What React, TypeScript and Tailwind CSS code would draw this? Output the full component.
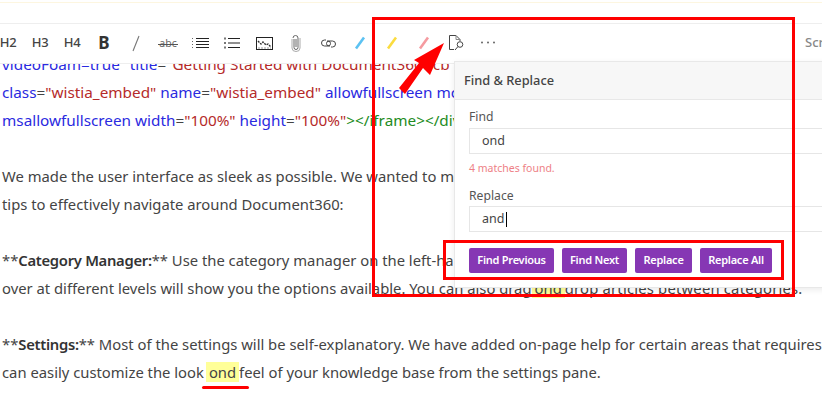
import React from 'react';

const font = { fontFamily: '"Noto Sans", sans-serif' };

const Slash = ({ color }: { color: string }) => (
    <svg width="12" height="14" viewBox="0 0 12 14">
        <path d="M2 12.5 L10 1.5" stroke={color} strokeWidth="2.6" />
    </svg>
);

const Tool = ({ children }: { children: React.ReactNode }) => (
    <div className="w-8 shrink-0 flex items-center justify-center">{children}</div>
);

const Label = ({ children }: { children: React.ReactNode }) => (
    <span className="text-[13px] font-medium text-[#444] tracking-[-0.3px]">{children}</span>
);

function Toolbar() {
    return (
        <div className="relative z-10 h-[41px] bg-white border-t border-[#eee] border-b flex items-center -ml-2 pb-[1px] w-[830px]">
            <Tool><Label>H2</Label></Tool>
            <Tool><Label>H3</Label></Tool>
            <Tool><Label>H4</Label></Tool>
            <Tool><span className="text-[17px] font-bold text-[#333]">B</span></Tool>
            <Tool>
                <svg width="10" height="17" viewBox="0 0 10 17"><path d="M8 1 L2 16" stroke="#777" strokeWidth="1.1" /></svg>
            </Tool>
            <Tool>
                <div className="relative text-[10.5px] leading-none text-[#666]">
                    abc
                    <div className="absolute -left-px -right-px top-[6px] h-px bg-[#555]" />
                </div>
            </Tool>
            <Tool>
                <svg width="17" height="12" viewBox="0 0 17 12" stroke="#222" fill="none">
                    <path d="M4 1.5H17M4 4.5H17M4 7.5H17M4 10.5H17" />
                    <path d="M0 1.5H2M0 4.5H2M0 7.5H2M0 10.5H2" strokeDasharray="1 1" stroke="#666" />
                </svg>
            </Tool>
            <Tool>
                <svg width="16" height="12" viewBox="0 0 16 12" stroke="#222" fill="none">
                    <path d="M4 1.5H16M4 6H16M4 10.5H16" />
                    <path d="M0 1.5H2M0 6H2M0 10.5H2" stroke="#777" strokeWidth="2" />
                </svg>
            </Tool>
            <Tool>
                <svg width="17" height="13" viewBox="0 0 17 13" fill="none">
                    <rect x="0.5" y="0.5" width="16" height="12" stroke="#222" />
                    <path d="M2 4 L5 7 L7 5 L10 8 L12 7 L15 10" stroke="#333" strokeWidth="1.4" strokeDasharray="2 1" />
                    <path d="M2 11H15" stroke="#999" strokeDasharray="2 1" />
                </svg>
            </Tool>
            <Tool>
                <svg width="10" height="17" viewBox="0 0 10 17" fill="none" stroke="#666">
                    <path d="M3 4 V12.5 a2 2 0 0 0 4 0 V3 a2.5 2.5 0 0 0 -5 0 M5 4 V12" />
                    <path d="M1 4 V13 a4 3.5 0 0 0 8 0 V3" stroke="#aaa" />
                </svg>
            </Tool>
            <Tool>
                <svg width="17" height="11" viewBox="0 0 17 11" fill="none" stroke="#444" strokeWidth="1">
                    <path d="M6 2 H4.5 a3 3 0 0 0 0 6 H8 a2.5 2.5 0 0 0 0 -5 H7" />
                    <path d="M11 9 H12.5 a3 3 0 0 0 0 -6 H9 a2.5 2.5 0 0 0 0 5 H10" />
                </svg>
            </Tool>
            <Tool><Slash color="#5cc2f2" /></Tool>
            <Tool><Slash color="#fbdc3f" /></Tool>
            <Tool><Slash color="#f59ba0" /></Tool>
            <Tool>
                <svg width="16" height="16" viewBox="0 0 16 16" fill="none" stroke="#444" className="ml-[2px]">
                    <path d="M5 14.5 H0.5 V0.5 H7 L11 4.5 V6" />
                    <path d="M7 0.5 V4.5 H11" stroke="#888" />
                    <circle cx="11" cy="9.5" r="2.8" />
                    <path d="M9 11.5 L6 15" />
                </svg>
            </Tool>
            <Tool>
                <svg width="16" height="3" viewBox="0 0 16 3" fill="#666" className="mb-[1px]">
                    <circle cx="2" cy="1.5" r="1" />
                    <circle cx="8" cy="1.5" r="1" />
                    <circle cx="14" cy="1.5" r="1" />
                </svg>
            </Tool>
            <span className="ml-auto text-[13px] text-[#888] font-medium w-[17px] whitespace-nowrap">Scr</span>
        </div>
    );
}

const Find = ({ className = '' }: { className?: string }) => <span className={`bg-[#ffff99] px-[3px] ${className}`}>ond</span>;

const Bold = ({ children }: { children: React.ReactNode }) => (
    <b className="font-semibold tracking-[-0.3px] text-[#333]">{children}</b>
);

function Editor() {
    return (
        <div className="h-[354px] overflow-hidden pl-[2px] text-[14.8px] leading-[28px] text-[#444] whitespace-nowrap">
            <div className="-mt-[14px]">
                <div className="text-[15.3px]">
                    <span className="text-[#2a2ae0]">videoFoam=true" </span>
                    <span className="text-[#2a2ae0]">title</span>=<span className="text-[#b52a2a]">"Getting Started with Document360" cb</span>
                </div>
                <div className="text-[15.3px]">
                    <span className="text-[#2a2ae0]">class</span>=<span className="text-[#b52a2a]">"wistia_embed"</span> <span className="text-[#2a2ae0]">name</span>=<span className="text-[#b52a2a]">"wistia_embed"</span> <span className="text-[#2a2ae0]">allowfullscreen mozallowfullscreen</span>
                </div>
                <div className="text-[15.3px]">
                    <span className="text-[#2a2ae0]">msallowfullscreen width</span>=<span className="text-[#b52a2a]">"100%"</span> <span className="text-[#2a2ae0]">height</span>=<span className="text-[#b52a2a]">"100%"</span><span className="text-[#228b22]">&gt;&lt;/iframe&gt;&lt;/div&gt;</span>
                </div>
                <div className="h-[28px]" />
                <div>We made the user interface as sleek as possible. We wanted to make it easy for you.</div>
                <div>tips to effectively navigate around Document360:</div>
                <div className="h-[28px]" />
                <div>**<Bold>Category Manager:</Bold>** Use the category manager on the left-hand side of the screen.</div>
                <div>over at different levels will show you the options available. You can also drag<Find /><span className="tracking-[0.2px]">drop articles between categories.</span></div>
                <div className="h-[28px]" />
                <div>**<Bold>Settings:</Bold>** Most of the settings will be self-explanatory. We have added on-page help for certain areas that requires a</div>
                <div>can easily customize the look<Find className="ml-[2px]" />feel of your knowledge base from the settings pane.</div>
            </div>
        </div>
    );
}

const Field = ({ value, caret }: { value: string; caret?: boolean }) => (
    <div className="h-[26px] border border-[#e6e6e6] bg-white pl-[12px] flex items-center text-[12.5px] text-[#444]">
        {value}
        {caret && <span className="ml-[2px] w-px h-[15px] bg-black" />}
    </div>
);

const Btn = ({ children, w }: { children: React.ReactNode; w: string }) => (
    <button className={`${w} h-[25px] rounded-[2px] bg-[#8637b4] text-white text-[11px] font-semibold tracking-[-0.25px]`}>{children}</button>
);

function Dialog() {
    return (
        <div className="absolute z-20 left-[454px] top-[61px] w-[400px] h-[227px] bg-white border border-[#e8e8e8] shadow-[0_2px_6px_rgba(0,0,0,0.08)]">
            <div className="h-[38px] bg-[#f7f7f7] border-b border-[#e8e8e8] pl-[9px] flex items-center text-[12.8px] font-medium text-[#444]">
                Find &amp; Replace
            </div>
            <div className="pl-[14px] pt-[8px]">
                <div className="text-[12.2px] leading-[18px] text-[#555] mb-[2px]">Find</div>
                <Field value="ond" />
                <div className="text-[10.5px] leading-[14px] mt-[7px] text-[#ee7f86]">4 matches found.</div>
                <div className="text-[12.2px] leading-[18px] text-[#555] mt-[12px] mb-[1px]">Replace</div>
                <Field value="and" caret />
                <div className="flex gap-2 mt-[16px]">
                    <Btn w="w-[85px]">Find Previous</Btn>
                    <Btn w="w-[65px]">Find Next</Btn>
                    <Btn w="w-[57px]">Replace</Btn>
                    <Btn w="w-[72px]">Replace All</Btn>
                </div>
            </div>
        </div>
    );
}

export default function App() {
    return (
        <div className="relative w-[822px] h-[418px] overflow-hidden bg-white" style={font}>
            <div className="h-[3px] bg-white border-b border-[#fdf6e0]" />
            <div className="h-[20px]" />
            <Toolbar />
            <Editor />
            <Dialog />

            {/* annotation overlays */}
            <div className="absolute z-30 left-[372px] top-[17px] w-[423px] h-[280px] border-[3px] border-[#ff0000]" />
            <div className="absolute z-30 left-[443px] top-[240px] w-[341px] h-[40px] border-[3px] border-[#ff0000]" />
            <svg className="absolute z-30 left-[395px] top-[38px]" width="55" height="60" viewBox="0 0 55 60">
                <path d="M49 5 L35 37 L28 30 L10 56 L4 50 L24 25 L19 22 Z" fill="#ff0000" />
            </svg>
            <div className="absolute z-30 left-[202px] top-[386px] w-[47px] h-[3px] rounded-full bg-[#ff0000]" />
        </div>
    );
}
